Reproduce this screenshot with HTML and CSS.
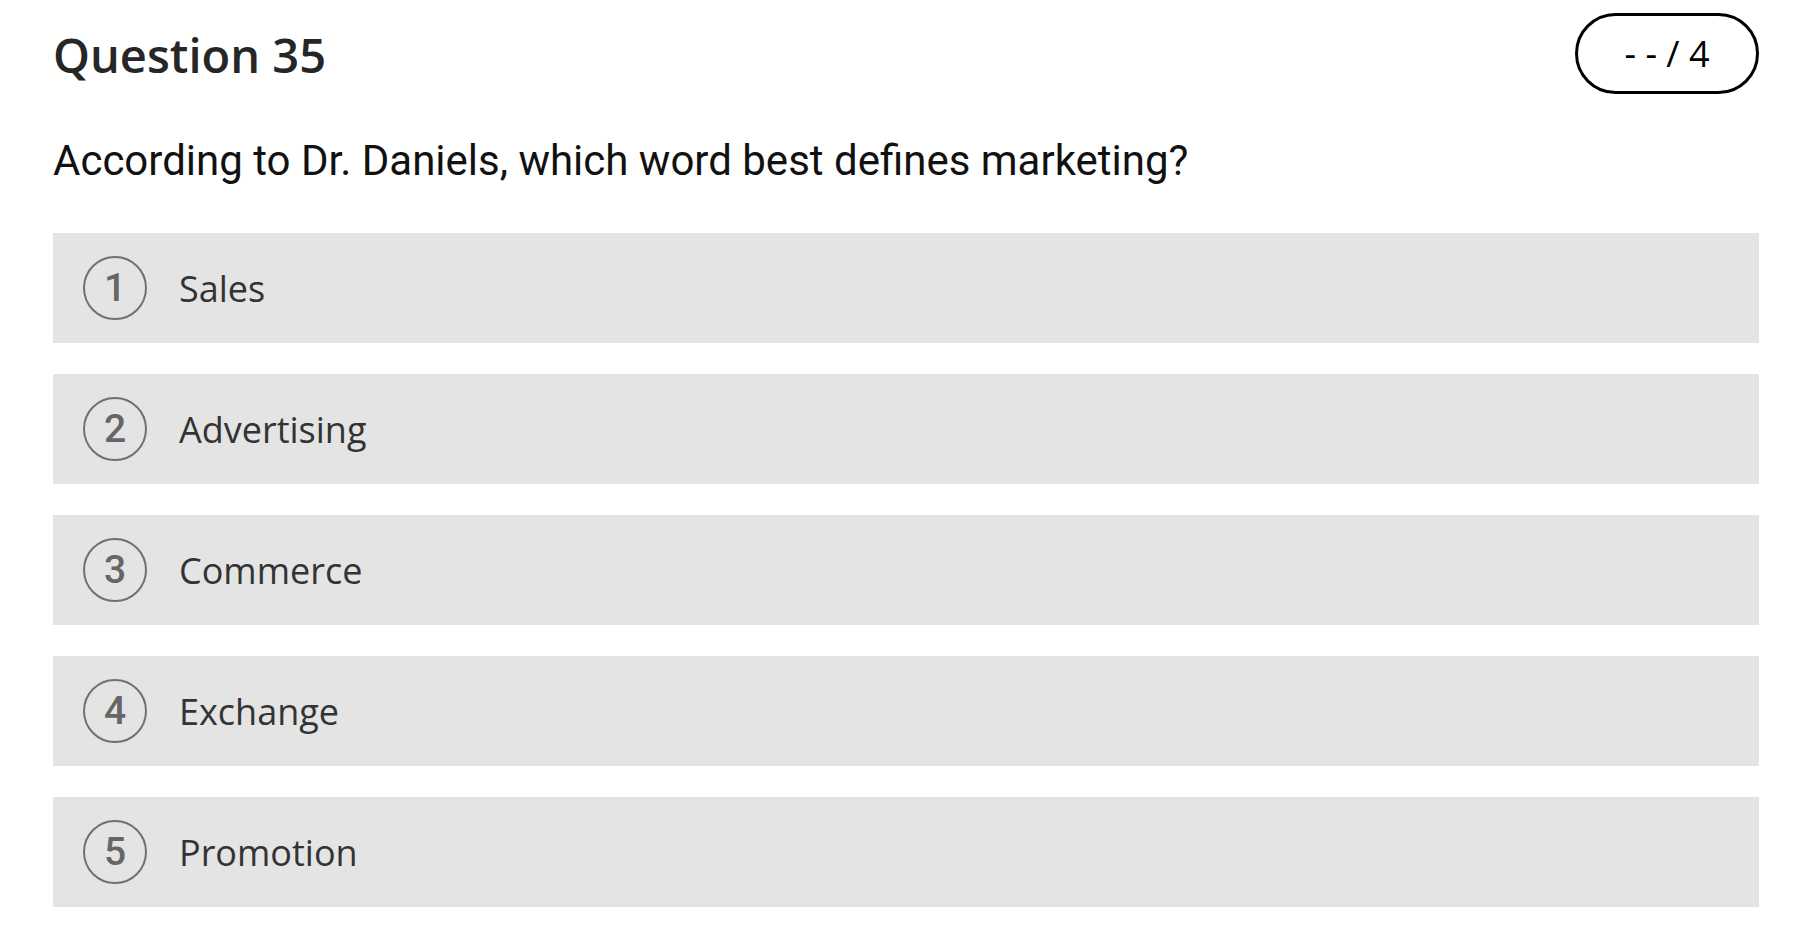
FILE: index.html
```html
<!DOCTYPE html>
<html lang="en">
<head>
<meta charset="utf-8">
<title>Question 35</title>
<link rel="stylesheet" href="styles.css">
</head>
<body>
<main class="quiz">
  <header class="quiz-header">
    <h1 class="quiz-title">Question 35</h1>
    <div class="score-pill">- - / 4</div>
  </header>
  <p class="quiz-prompt">According to Dr. Daniels, which word best defines marketing?</p>
  <ol class="options">
    <li class="option"><span class="option-num">1</span><span class="option-label">Sales</span></li>
    <li class="option"><span class="option-num">2</span><span class="option-label">Advertising</span></li>
    <li class="option"><span class="option-num">3</span><span class="option-label">Commerce</span></li>
    <li class="option"><span class="option-num">4</span><span class="option-label">Exchange</span></li>
    <li class="option"><span class="option-num">5</span><span class="option-label">Promotion</span></li>
  </ol>
</main>
</body>
</html>
```
FILE: styles.css
```css
html, body {
  margin: 0;
  padding: 0;
  background: #ffffff;
}

.quiz {
  padding: 13px 53px 0 53px;
}

.quiz-header {
  display: flex;
  justify-content: space-between;
  align-items: center;
}

.quiz-title {
  margin: 2px 0 0 0;
  font-family: "Open Sans", "Liberation Sans", sans-serif;
  font-weight: 600;
  font-size: 47px;
  line-height: 64px;
  color: #262626;
}

.score-pill {
  box-sizing: border-box;
  width: 184px;
  height: 81px;
  border: 3px solid #000;
  border-radius: 41px;
  display: flex;
  align-items: center;
  justify-content: center;
  font-family: "Open Sans", "Liberation Sans", sans-serif;
  font-size: 36px;
  color: #000;
}

.quiz-prompt {
  margin: 42px 0 0 0;
  font-family: Roboto, "Liberation Sans", sans-serif;
  font-size: 42px;
  line-height: 50px;
  color: #111;
}

.options {
  list-style: none;
  margin: 47px 0 0 0;
  padding: 0;
  display: flex;
  flex-direction: column;
  gap: 31px;
}

.option {
  height: 110px;
  background: #e4e4e4;
  display: flex;
  align-items: center;
  padding-left: 30px;
  gap: 32px;
}

.option-num {
  box-sizing: border-box;
  width: 64px;
  height: 64px;
  border: 2px solid #707070;
  border-radius: 50%;
  display: flex;
  align-items: center;
  justify-content: center;
  font-family: Roboto, "Liberation Sans", sans-serif;
  font-weight: 500;
  font-size: 39px;
  color: #666;
}

.option-label {
  font-family: "Open Sans", "Liberation Sans", sans-serif;
  font-size: 36px;
  color: #333;
}
```
